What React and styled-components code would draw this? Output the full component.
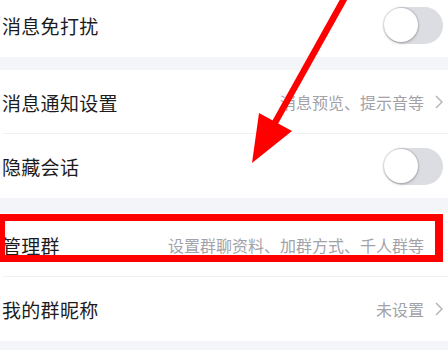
import React from "react";
import styled, { createGlobalStyle } from "styled-components";

const GlobalStyle = createGlobalStyle`
  html, body {
    margin: 0;
    padding: 0;
    background: #f4f5f8;
    font-family: "Noto Sans CJK SC", "Noto Sans", sans-serif;
  }
`;

const Page = styled.div`
  position: relative;
  width: 448px;
  height: 350px;
  overflow: hidden;
  background: #f4f5f8;
  display: flex;
  flex-direction: column;
`;

const Group = styled.div`
  background: #ffffff;
  display: flex;
  flex-direction: column;
  margin-top: ${(p) => p.offset || 0}px;
  flex-shrink: 0;
`;

const Gap = styled.div`
  height: ${(p) => p.size}px;
  flex-shrink: 0;
`;

const Row = styled.div`
  position: relative;
  height: 64px;
  box-sizing: border-box;
  display: flex;
  align-items: center;
  justify-content: space-between;
  padding: 0 5px 0 2px;
  &:not(:last-child)::after {
    content: "";
    position: absolute;
    left: 3px;
    right: 0;
    bottom: 0;
    height: 1px;
    background: #f1f1f3;
  }
`;

const Label = styled.span`
  font-size: 19px;
  color: #1c1c1e;
  letter-spacing: 0.3px;
`;

const Right = styled.div`
  display: flex;
  align-items: center;
  gap: 11px;
`;

const Hint = styled.span`
  font-size: 16px;
  color: #a2a2a8;
`;

const Track = styled.div`
  position: relative;
  width: 59px;
  height: 37px;
  border-radius: 19px;
  background: #dcdce3;
`;

const Knob = styled.div`
  position: absolute;
  left: 0;
  top: 1px;
  width: 34px;
  height: 34px;
  border-radius: 50%;
  background: #ffffff;
  box-shadow: 0 0 0 1.5px rgba(0, 0, 0, 0.1), 0 2px 3px rgba(0, 0, 0, 0.12);
`;

const Highlight = styled.div`
  position: absolute;
  left: -1px;
  top: 1px;
  width: 444px;
  height: 48px;
  box-sizing: border-box;
  border: 7px solid #ff0000;
  border-left-width: 6px;
  border-right-width: 8px;
  pointer-events: none;
`;

const Overlay = styled.svg`
  position: absolute;
  left: 0;
  top: 0;
  pointer-events: none;
`;

const Chevron = () => (
  <svg width="8" height="14" viewBox="0 0 8 14">
    <polyline points="1,1 7,7 1,13" fill="none" stroke="#b5b5ba" strokeWidth="1.5" />
  </svg>
);

const Toggle = () => (
  <Track>
    <Knob />
  </Track>
);

const App = () => {
  return (
    <>
      <GlobalStyle />
      <Page>
        <Group offset={-7}>
          <Row>
            <Label>消息免打扰</Label>
            <Toggle />
          </Row>
        </Group>
        <Gap size={13} />
        <Group>
          <Row>
            <Label>消息通知设置</Label>
            <Right>
              <Hint>消息预览、提示音等</Hint>
              <Chevron />
            </Right>
          </Row>
          <Row>
            <Label>隐藏会话</Label>
            <Toggle />
          </Row>
        </Group>
        <Gap size={15} />
        <Group>
          <Row>
            <Label>管理群</Label>
            <Right>
              <Hint>设置群聊资料、加群方式、千人群等</Hint>
              <Chevron />
            </Right>
            <Highlight />
          </Row>
          <Row>
            <Label>我的群昵称</Label>
            <Right>
              <Hint>未设置</Hint>
              <Chevron />
            </Right>
          </Row>
        </Group>
        <Overlay width="448" height="350" viewBox="0 0 448 350">
          <line x1="349" y1="-10" x2="272" y2="128" stroke="#ff0000" strokeWidth="6.5" />
          <polygon points="252,163 259,113 292,131" fill="#ff0000" />
        </Overlay>
      </Page>
    </>
  );
};

export default App;
